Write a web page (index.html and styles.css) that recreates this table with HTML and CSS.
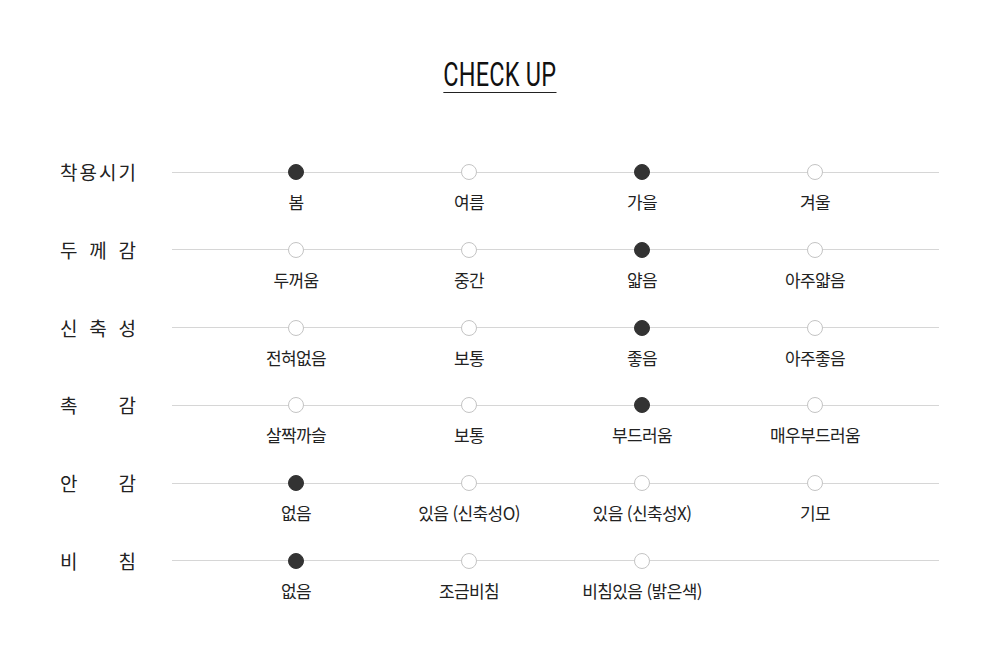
FILE: index.html
```html
<!DOCTYPE html>
<html lang="ko">
<head>
<meta charset="utf-8">
<title>CHECK UP</title>
<link rel="stylesheet" href="styles.css">
</head>
<body>
<div class="page">
  <div class="title-wrap"><h1 class="title">CHECK UP</h1></div>
  <div class="rows">
    <div class="row">
      <div class="label"><span>착</span><span>용</span><span>시</span><span>기</span></div>
      <div class="track">
        <div class="opt"><i class="dot on"></i><span>봄</span></div>
        <div class="opt"><i class="dot"></i><span>여름</span></div>
        <div class="opt"><i class="dot on"></i><span>가을</span></div>
        <div class="opt"><i class="dot"></i><span>겨울</span></div>
      </div>
    </div>
    <div class="row">
      <div class="label"><span>두</span><span>께</span><span>감</span></div>
      <div class="track">
        <div class="opt"><i class="dot"></i><span>두꺼움</span></div>
        <div class="opt"><i class="dot"></i><span>중간</span></div>
        <div class="opt"><i class="dot on"></i><span>얇음</span></div>
        <div class="opt"><i class="dot"></i><span>아주얇음</span></div>
      </div>
    </div>
    <div class="row">
      <div class="label"><span>신</span><span>축</span><span>성</span></div>
      <div class="track">
        <div class="opt"><i class="dot"></i><span>전혀없음</span></div>
        <div class="opt"><i class="dot"></i><span>보통</span></div>
        <div class="opt"><i class="dot on"></i><span>좋음</span></div>
        <div class="opt"><i class="dot"></i><span>아주좋음</span></div>
      </div>
    </div>
    <div class="row">
      <div class="label"><span>촉</span><span>감</span></div>
      <div class="track">
        <div class="opt"><i class="dot"></i><span>살짝까슬</span></div>
        <div class="opt"><i class="dot"></i><span>보통</span></div>
        <div class="opt"><i class="dot on"></i><span>부드러움</span></div>
        <div class="opt"><i class="dot"></i><span>매우부드러움</span></div>
      </div>
    </div>
    <div class="row">
      <div class="label"><span>안</span><span>감</span></div>
      <div class="track">
        <div class="opt"><i class="dot on"></i><span>없음</span></div>
        <div class="opt"><i class="dot"></i><span>있음 (신축성O)</span></div>
        <div class="opt"><i class="dot"></i><span>있음 (신축성X)</span></div>
        <div class="opt"><i class="dot"></i><span>기모</span></div>
      </div>
    </div>
    <div class="row">
      <div class="label"><span>비</span><span>침</span></div>
      <div class="track">
        <div class="opt"><i class="dot on"></i><span>없음</span></div>
        <div class="opt"><i class="dot"></i><span>조금비침</span></div>
        <div class="opt"><i class="dot"></i><span>비침있음 (밝은색)</span></div>
      </div>
    </div>
  </div>
</div>
</body>
</html>
```
FILE: styles.css
```css
html, body {
  margin: 0;
  padding: 0;
  background: #ffffff;
}
body {
  font-family: "Noto Sans CJK KR", "Noto Sans", sans-serif;
  color: #222222;
}
.page {
  width: 1000px;
  height: 661px;
  overflow: hidden;
}
.title-wrap {
  display: flex;
  justify-content: center;
  padding-top: 57px;
}
.title {
  margin: 0;
  display: inline-block;
  font-family: Roboto, "Liberation Sans", sans-serif;
  font-weight: 400;
  font-size: 34px;
  line-height: 35px;
  letter-spacing: 0.3px;
  color: #111111;
  border-bottom: 1.5px solid #222222;
  transform: scaleX(0.69);
  transform-origin: center;
}
.rows {
  padding: 0 61px 0 60px;
  margin-top: 71px;
}
.row {
  display: grid;
  grid-template-columns: 76px 1fr;
  column-gap: 36px;
  height: 77.8px;
}
.label {
  display: flex;
  justify-content: space-between;
  height: 16px;
  line-height: 16px;
  font-size: 19px;
  color: #222222;
}
.track {
  display: grid;
  grid-template-columns: repeat(4, 173px);
  padding-left: 37.5px;
  background: linear-gradient(#d6d6d6, #d6d6d6) left 7.5px / 100% 1px no-repeat;
  align-items: start;
}
.opt {
  display: flex;
  flex-direction: column;
  align-items: center;
}
.dot {
  display: block;
  width: 16px;
  height: 16px;
  box-sizing: border-box;
  border-radius: 50%;
  background: #ffffff;
  border: 1px solid #c4c4c4;
}
.dot.on {
  background: #333333;
  border-color: #333333;
}
.opt span {
  margin-top: 11px;
  font-size: 17px;
  line-height: 22px;
  letter-spacing: -0.6px;
  color: #222222;
  white-space: nowrap;
}
```
